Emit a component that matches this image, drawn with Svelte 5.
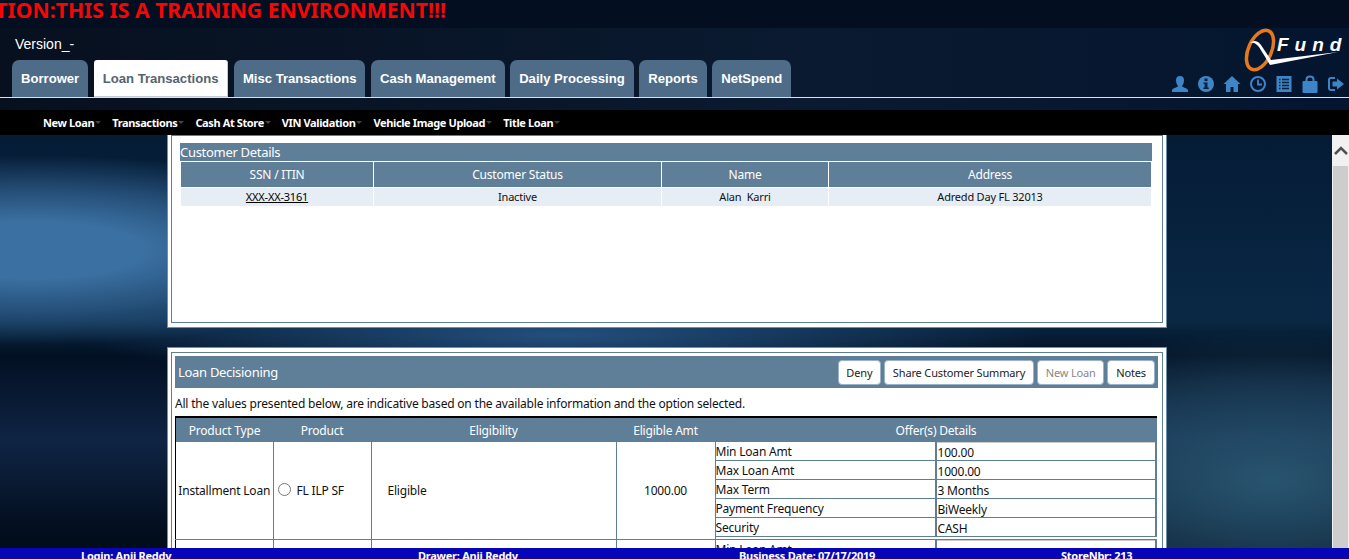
<script lang="ts">
  const tabs = ['Borrower', 'Loan Transactions', 'Misc Transactions', 'Cash Management', 'Daily Processing', 'Reports', 'NetSpend'];
  const menu = ['New Loan', 'Transactions', 'Cash At Store', 'VIN Validation', 'Vehicle Image Upload', 'Title Loan'];
  const offers = [
    ['Min Loan Amt', '100.00'],
    ['Max Loan Amt', '1000.00'],
    ['Max Term', '3 Months'],
    ['Payment Frequency', 'BiWeekly'],
    ['Security', 'CASH'],
  ];
</script>

<div class="page">
  <header class="top">
    <div class="banner"><span>CAUTION:THIS IS A TRAINING ENVIRONMENT!!!</span></div>
    <div class="head-row">
      <div class="head-left">
        <div class="version">Version_-</div>
        <nav class="tabs">
          {#each tabs as tab, i}
            <button class="tab" class:active={i === 1}>{tab}</button>
          {/each}
        </nav>
      </div>
      <div class="head-right">
        <div class="logo">
          <svg width="104" height="44" viewBox="0 0 104 44">
            <ellipse cx="18" cy="22" rx="11.500" ry="21" transform="rotate(24 18 22)" fill="none" stroke="#e8791a" stroke-width="3.500" />
            <path d="M8 15 C13 11 17 13 21 20 L29 32 L96 24 L28 37 C24 30 20 24 17 19 C14 15 11 14 8 15Z" fill="#fff" />
          </svg>
          <span class="logo-text">Fund</span>
        </div>
        <div class="icons">
          <svg width="18" height="18" viewBox="0 0 18 18"><path d="M9 1c3 0 4 2 4 4 0 3-1 5-2 6 0 1 5 2 6 4v2H1v-2c1-2 6-3 6-4-1-1-2-3-2-6 0-2 1-4 4-4z" /></svg>
          <svg width="18" height="18" viewBox="0 0 18 18"><circle cx="9" cy="9" r="8" /><rect x="7.500" y="3.500" width="3" height="2.600" fill="#0b2038" /><path d="M6.500 7.500h4v5h1.200v1.600H6.400v-1.600h1.200V9H6.500z" fill="#0b2038" /></svg>
          <svg width="18" height="18" viewBox="0 0 18 18"><path d="M9 1L0.500 9H3v8h4.500v-5h3v5H15V9h2.500z" /></svg>
          <svg width="18" height="18" viewBox="0 0 18 18"><circle cx="9" cy="9" r="7" fill="none" stroke="#3d85c6" stroke-width="2" /><path d="M9 4.500V9.500H13" fill="none" stroke="#3d85c6" stroke-width="1.800" /></svg>
          <svg width="18" height="18" viewBox="-1 0 18 18"><rect x="0.500" y="1" width="15" height="16" /><path d="M3 4.500h1.500M6 4.500h7M3 7.500h1.500M6 7.500h7M3 10.500h1.500M6 10.500h7M3 13.500h1.500M6 13.500h7" stroke="#0b2038" stroke-width="1.300" /></svg>
          <svg width="18" height="18" viewBox="-1 0 18 18"><rect x="0.500" y="6" width="15" height="12" rx="1" /><path d="M4.500 7V4.500C4.500 2.500 6 1.500 8 1.500s3.500 1 3.500 3V7" fill="none" stroke="#3d85c6" stroke-width="2" /></svg>
          <svg width="18" height="18" viewBox="0 0 18 18"><path d="M8 2H4C2 2 1 3 1 5v8c0 2 1 3 3 3h4v-2H4c-.7 0-1-.4-1-1V5c0-.7.3-1 1-1h4z" /><path d="M10 3.500L17 9l-7 5.500V11.500H5.500v-5H10z" /></svg>
        </div>
      </div>
    </div>
    <div class="rule"></div>
    <nav class="menu">
      {#each menu as item}
        <span class="menu-item">{item}<i class="caret"></i></span>
      {/each}
    </nav>
  </header>

  <div class="body">
    <main class="scroll">
      <section class="panel first">
        <div class="inner">
          <div class="bar">Customer Details</div>
          <table class="customers">
            <thead>
              <tr><th class="c1">SSN / ITIN</th><th class="c2">Customer Status</th><th class="c3">Name</th><th>Address</th></tr>
            </thead>
            <tbody>
              <tr><td><a href="#ssn">XXX-XX-3161</a></td><td>Inactive</td><td>Alan&nbsp; Karri</td><td>Adredd Day FL 32013</td></tr>
            </tbody>
          </table>
        </div>
      </section>

      <section class="panel second">
        <div class="inner">
          <div class="bar decision">
            <span>Loan Decisioning</span>
            <div class="actions">
              <button class="tight">Deny</button>
              <button>Share Customer Summary</button>
              <button class="tight off">New Loan</button>
              <button>Notes</button>
            </div>
          </div>
          <p class="note">All the values presented below, are indicative based on the available information and the option selected.</p>
          <table class="loans">
            <thead>
              <tr>
                <th class="p1">Product Type</th><th class="p2">Product</th><th class="p3">Eligibility</th><th class="p4">Eligible Amt</th>
                <th colspan="2">Offer(s) Details</th>
              </tr>
            </thead>
            <tbody>
              <tr>
                <td class="nowrap">Installment Loan</td>
                <td class="left"><span class="radio"></span>FL ILP SF</td>
                <td class="left elig">Eligible</td>
                <td>1000.00</td>
                <td class="offer-keys" colspan="2">
                  <div class="offers">
                    {#each offers as o}
                      <div class="k">{o[0]}</div><div class="v">{o[1]}</div>
                    {/each}
                  </div>
                </td>
              </tr>
              <tr class="next">
                <td></td><td></td><td></td><td></td>
                <td class="offer-keys" colspan="2"><div class="offers"><div class="k">Min Loan Amt</div><div class="v"></div></div></td>
              </tr>
            </tbody>
          </table>
        </div>
      </section>
    </main>
    <div class="scrollbar">
      <div class="arrow"><svg width="14" height="9" viewBox="0 0 14 9"><path d="M1 8l6-6 6 6" fill="none" stroke="#505050" stroke-width="2.500" /></svg></div>
      <div class="thumb"></div>
    </div>
  </div>

  <footer class="foot">
    <span class="f1">Login: Anji Reddy</span>
    <span class="f2">Drawer: Anji Reddy</span>
    <span class="f3">Business Date: 07/17/2019</span>
    <span class="f4">StoreNbr: 213</span>
  </footer>
</div>

<style>
  :global(body) {
    margin: 0;
    overflow: hidden;
  }
  .page {
    display: flex;
    flex-direction: column;
    height: 559px;
    overflow: hidden;
    letter-spacing: -0.2px;
    font-family: "Noto Sans", "Open Sans", sans-serif;
    background:
      radial-gradient(ellipse 380px 95px at 30px 250px, #3b70a2 0%, #3b70a2 30%, rgba(59, 112, 162, 0.55) 65%, transparent 100%),
      radial-gradient(ellipse 320px 150px at 1270px 480px, #28546f 0%, rgba(40, 84, 111, 0.45) 65%, transparent 100%),
      radial-gradient(ellipse 480px 50px at 560px 335px, #234f7d 0%, transparent 100%),
      linear-gradient(#04142a 0, #061f3a 190px, #0a2845 320px, #021022 356px, #0f2444 440px, #020d1c 535px);
  }
  .top {
    flex-shrink: 0;
    background: linear-gradient(90deg, #07101f, #0a1a30 60%, #04152f);
  }
  .banner {
    height: 28px;
    overflow: hidden;
    background: #030f20;
  }
  .banner span {
    display: block;
    margin-left: -49px;
    color: #f60606;
    font: 700 21.200px/20px "Noto Sans", sans-serif;
    letter-spacing: 0;
    white-space: nowrap;
  }
  .head-row {
    display: flex;
    justify-content: space-between;
    height: 69px;
  }
  .version {
    padding: 7px 0 0 15px;
    height: 25px;
    box-sizing: border-box;
    color: #fff;
    font: 14px/18px "Liberation Sans", Arial, sans-serif;
    letter-spacing: 0;
  }
  .tabs {
    display: flex;
    gap: 5.500px;
    margin: 7px 0 0 12px;
  }
  .tab {
    height: 37px;
    padding: 0 9px;
    border: 0;
    border-radius: 7px 7px 0 0;
    background: #4e6c87;
    color: #fff;
    font: 700 13.100px "Liberation Sans", Arial, sans-serif;
    white-space: nowrap;
  }
  .tab.active {
    background: #fff;
    color: #55636f;
    border-right: 1px solid #c4ccd4;
    border-bottom: 1px solid #c4ccd4;
    border-radius: 3px 3px 0 0;
  }
  .head-right {
    display: flex;
    flex-direction: column;
    align-items: flex-end;
    width: 190px;
  }
  .logo {
    position: relative;
    width: 104px;
    height: 44px;
    margin-right: 3px;
  }
  .logo-text {
    position: absolute;
    left: 35px;
    top: 5px;
    color: #fff;
    font: italic 700 19px/24px "Liberation Sans", sans-serif;
    letter-spacing: 6px;
  }
  .icons {
    display: flex;
    align-items: center;
    gap: 8px;
    margin: 3px 4px 0 0;
  }
  .icons svg { fill: #3d85c6; }
  .rule {
    height: 1px;
    background: #d6e2ec;
  }
  .menu {
    display: flex;
    align-items: center;
    height: 25px;
    margin-top: 12px;
    padding-left: 43px;
    background: #000;
    gap: 12px;
  }
  .menu-item {
    position: relative;
    color: #fff;
    font: 700 11px/16px "Noto Sans", sans-serif;
    letter-spacing: -0.38px;
    white-space: nowrap;
    padding-right: 6px;
  }
  .caret {
    position: absolute;
    right: -1px;
    top: 6px;
    border: 3px solid transparent;
    border-top: 3px solid #444;
    border-bottom: 0;
  }
  .body {
    flex: 1;
    min-height: 0;
    display: flex;
  }
  .scroll {
    flex: 1;
    min-width: 0;
    overflow: hidden;
    padding-left: 168px;
  }
  .panel {
    width: 998px;
    box-sizing: border-box;
    padding: 3px;
    background: #fff;
    outline: 1px solid #6f8ea8;
  }
  .inner {
    border: 1px solid #5f7e97;
    box-sizing: border-box;
  }
  .first {
    height: 195px;
    margin-top: -3px;
  }
  .first .inner { height: 188px; padding: 7px 10px 0 8px; }
  .second { margin-top: 21px; padding-top: 4px; }
  .second .inner { padding: 3px 4px 0 3px; height: 300px; }
  .bar {
    background: #5f7e97;
    color: #fff;
    font-size: 13px;
    letter-spacing: -0.3px;
    line-height: 18px;
    height: 18px;
  }
  .customers {
    width: 970px;
    margin: 1px 0 0 1px;
    border-collapse: collapse;
    table-layout: fixed;
    font-size: 11px;
  }
  .customers th {
    height: 25px;
    padding: 0;
    background: #5f7e97;
    color: #fff;
    font-size: 12px;
    font-weight: 400;
    border-left: 1px solid #fff;
  }
  .customers th:first-child, .customers td:first-child { border-left: 0; }
  .customers td {
    height: 18px;
    padding: 0 0 1px;
    box-sizing: border-box;
    border-top: 1px solid #fff;
    border-left: 1px solid #fff;
    background: #e6edf4;
    color: #111;
    text-align: center;
  }
  .customers a { color: #000; }
  .c1 { width: 192px; }
  .c2 { width: 287px; }
  .c3 { width: 166px; }
  .decision {
    display: flex;
    align-items: center;
    justify-content: space-between;
    height: 32px;
    padding: 0 3px;
    line-height: 32px;
  }
  .actions {
    display: flex;
    gap: 3px;
  }
  .actions button {
    height: 25px;
    padding: 0 8px;
    background: #fff;
    border: 1px solid #9bb3c8;
    border-radius: 4px;
    color: #222;
    font: 11px "Noto Sans", sans-serif;
    letter-spacing: -0.15px;
    white-space: nowrap;
  }
  .actions button.tight { padding: 0 7.500px; }
  .actions button.off { color: #888; }
  .note {
    margin: 0;
    height: 28px;
    line-height: 32px;
    font-size: 12px;
    color: #111;
    white-space: nowrap;
  }
  .loans {
    width: 982px;
    border-collapse: collapse;
    table-layout: fixed;
    border-top: 2px solid #000;
    border-left: 1px solid #000;
    font-size: 12px;
    color: #111;
  }
  .loans th {
    height: 24px;
    padding: 0;
    background: #5f7e97;
    color: #fff;
    font-size: 12px;
    font-weight: 400;
  }
  .loans td {
    height: 97px;
    padding: 0;
    border-right: 1px solid #5f7e97;
    border-bottom: 1px solid #5f7e97;
    text-align: center;
  }
  .p1 { width: 97px; }
  .p2 { width: 98px; }
  .p3 { width: 245px; }
  .p4 { width: 99px; }
  .loans td.left { text-align: left; padding-left: 4px; }
  .loans td.elig { padding-left: 16px; }
  .nowrap { white-space: nowrap; }
  .radio {
    display: inline-block;
    width: 11px;
    height: 11px;
    margin-right: 6px;
    border: 1px solid #777;
    border-radius: 50%;
    vertical-align: -1px;
  }
  .loans td.offer-keys {
    vertical-align: top;
    text-align: left;
    border-right: 0;
  }
  .offers {
    display: grid;
    grid-template-columns: 219px 1fr;
  }
  .k, .v {
    height: 18px;
    line-height: 19px;
    border-bottom: 1px solid #5f7e97;
    font-size: 12px;
  }
  .v {
    padding-left: 1px;
    line-height: 21px;
    border-left: 2px solid #5f7e97;
    border-right: 2px solid #5f7e97;
  }
  .v:nth-child(2) { box-shadow: inset 0 1px #ccc; }
  .next td { height: 20px; }
  .scrollbar {
    width: 17px;
    flex-shrink: 0;
    background: #f1f1f1;
  }
  .arrow {
    height: 31px;
    display: flex;
    align-items: center;
    justify-content: center;
  }
  .thumb {
    height: 382px;
    margin: 0 1px;
    background: #cdcdcd;
  }
  .foot {
    position: absolute;
    left: 0;
    top: 548px;
    width: 100%;
    height: 11px;
    overflow: hidden;
    background: #0606b8;
    color: #fff;
    font: 700 11px/15px "Noto Sans", sans-serif;
    letter-spacing: -0.25px;
  }
  .foot span { position: absolute; top: 0; white-space: nowrap; }
  .f1 { left: 81px; }
  .f2 { left: 418px; }
  .f3 { left: 739px; }
  .f4 { left: 1061px; }
</style>
